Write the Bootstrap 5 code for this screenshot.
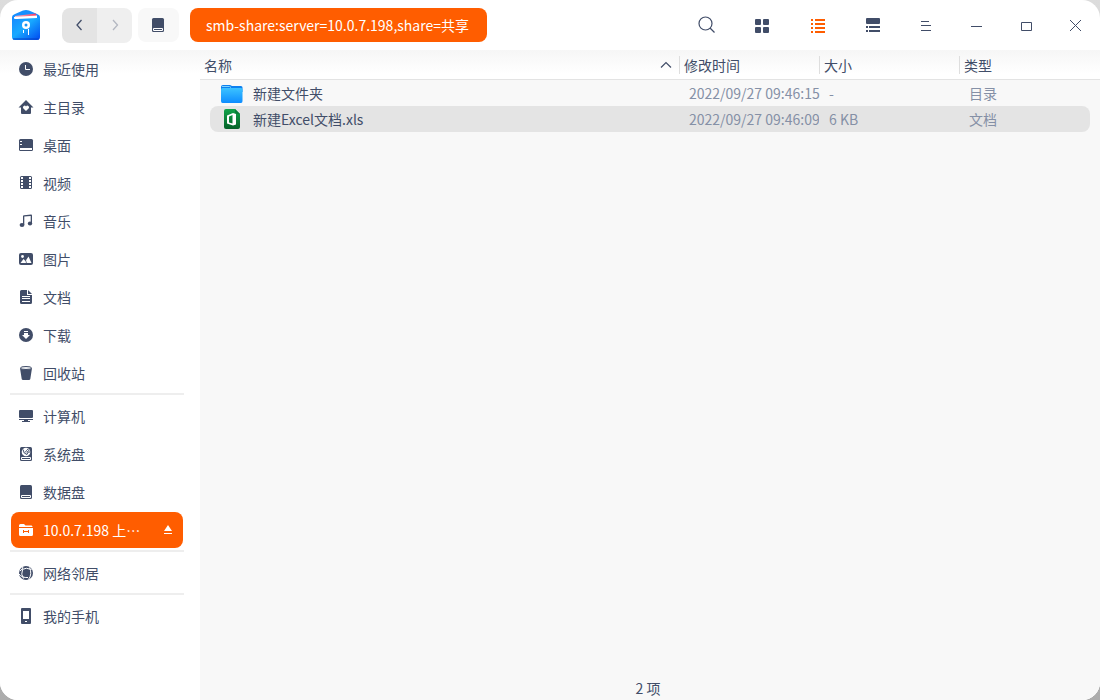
<!DOCTYPE html>
<html lang="zh-CN">
<head>
<meta charset="utf-8">
<meta name="viewport" content="width=device-width, initial-scale=1">
<title>文件管理器</title>
<link href="https://cdn.jsdelivr.net/npm/bootstrap@5.3.0/dist/css/bootstrap.min.css" rel="stylesheet">
<style>
:root { --ink: #414d68; --accent: #ff5d00; --muted-ink: #8590a6; }
body { font-family: "Noto Sans CJK SC", sans-serif; font-size: 14px; line-height: 20px; color: var(--ink);
  background: linear-gradient(#dcdcdc, #acacac); }
svg { display: block; flex: none; }
.app-window { border-radius: 18px; background: #fff; overflow: hidden; }
.titlebar { height: 50px; padding-left: 10px; }
.titlebar .btn { --bs-btn-padding-x: 0; --bs-btn-padding-y: 0; --bs-btn-font-size: 14px; --bs-btn-border-width: 0;
  --bs-btn-color: var(--ink); display: flex; align-items: center; justify-content: center; height: 34px; line-height: 20px; }
.history-nav { border-radius: 8px; overflow: hidden; margin-left: 20px; }
.history-nav .btn { width: 35px; height: 35px; border-radius: 0; background: #efefef; }
.history-nav .btn:first-child { background: #e4e4e4; }
.titlebar .disk-btn { width: 41px; background: #f8f8f8; border-radius: 8px; margin-left: 6px; }
.titlebar .path-btn { background: var(--accent); color: #fff; padding: 0 18px 0 16px; border-radius: 8px; margin-left: 11px; }
.view-btns { gap: 20px; margin-right: 8px; }
.view-btns .btn { width: 36px; }
.window-btns .btn { width: 50px; height: 50px; border-radius: 0; }
.work-area { background: linear-gradient(#f6f6f6, #fff 24px); }
.sidebar { width: 200px; padding: 0 16px 0 10px; }
.place { display: flex; align-items: center; gap: 9px; height: 36px; margin: 1px; padding: 0 11px 0 7px;
  border-radius: 8px; color: var(--ink); text-decoration: none; }
.place.active { background: var(--accent); color: #fff; }
.place-break { height: 2px; margin: 1px 0 2px; border: 0; background: #eee; opacity: 1; }
.file-pane { background: #f8f8f8; }
.file-table { --bs-table-bg: transparent; --bs-table-color: var(--ink); table-layout: fixed; width: 100%; margin: 0; color: var(--ink); }
.file-table > thead { background: linear-gradient(#f6f6f6, #fff 24px); }
.file-table > thead > tr > th { height: 30px; padding: 0 4px; font-weight: 400; vertical-align: middle; border: 0; box-shadow: inset 0 -1px #e3e3e3; }
.file-table > thead > tr > th + th { background: linear-gradient(#dedede, #dedede) 0 6px / 1px 18px no-repeat; padding-left: 5px; }
.file-table > tbody > tr > td { position: relative; z-index: 1; height: 26px; padding: 0 0 0 10px; vertical-align: middle; border: 0;
  color: var(--muted-ink); white-space: nowrap; }
.file-table > tbody > tr > td:first-child { padding-left: 21px; color: var(--ink); }
.selected > td::before { content: ""; position: absolute; z-index: -1; inset: 0; background: #e4e4e4; }
.selected > td:first-child::before { left: 10px; border-radius: 8px 0 0 8px; }
.selected > td:last-child::before { right: 10px; border-radius: 0 8px 8px 0; }
.col-date, .col-size { width: 140px; }
.col-kind { width: 141px; }
.status { height: 22px; padding-right: 4px; }
</style>
</head>
<body>
<div class="app-window d-flex flex-column vh-100">
  <header class="titlebar d-flex align-items-center">
    <svg width="32" height="32" viewBox="0 0 32 32" aria-hidden="true">
      <defs>
        <linearGradient id="logoBody" x1="0" y1="0" x2="1" y2="1"><stop offset="0" stop-color="#1686ff"/><stop offset=".45" stop-color="#18a9ff"/><stop offset="1" stop-color="#0048f0"/></linearGradient>
        <linearGradient id="logoRed"><stop offset="0" stop-color="#ffb9c2"/><stop offset="1" stop-color="#f23864"/></linearGradient>
      </defs>
      <path d="M2 8Q2 6 5 5L13 1.500Q16 .500 19 1.500L27 5Q30 6 30 8V20H2Z" fill="#168fff"/>
      <path d="M5 7L26 4.500L27 10H5Z" fill="url(#logoRed)"/>
      <path d="M4 8L27 6.500V12H4Z" fill="#fff"/>
      <path d="M2 8Q3 10 7 10L27 9Q30 9 30 7V28Q30 31 27 31H5Q2 31 2 28Z" fill="url(#logoBody)"/>
      <path d="M3 30H29" stroke="#0540c7"/>
      <circle cx="16" cy="16" r="4" fill="#fff"/><circle cx="16" cy="16" r="1.500" fill="#1695f5"/>
      <path d="M13.500 21V24M18.500 20V26" stroke="#fff"/>
    </svg>
    <div class="history-nav d-flex">
      <button type="button" class="btn" aria-label="后退"><svg width="16" height="16" fill="none" stroke="#414d68" stroke-width="1.300"><path d="M9.500 3L5 8L9.500 13"/></svg></button>
      <button type="button" class="btn" aria-label="前进"><svg width="16" height="16" fill="none" stroke="#b3b7c1" stroke-width="1.300"><path d="M6 3L10.500 8L6 13"/></svg></button>
    </div>
    <button type="button" class="btn disk-btn" aria-label="数据盘"><svg width="16" height="16"><path d="M1 2.500Q1 1 2.500 1H11.500Q13 1 13 2.500V13.500Q13 15 11.500 15H2.500Q1 15 1 13.500Z" fill="#414d68"/><path d="M2.500 11.500H11.500V13.500H2.500Z" fill="none" stroke="#fff"/></svg></button>
    <button type="button" class="btn path-btn">smb-share:server=10.0.7.198,share=共享</button>
    <div class="view-btns d-flex ms-auto">
      <button type="button" class="btn" aria-label="搜索"><svg width="18" height="18" fill="none" stroke="#414d68" stroke-width="1.200"><circle cx="8.500" cy="7.500" r="6.500"/><path d="M13 12L17.500 16.500"/></svg></button>
      <button type="button" class="btn" aria-label="图标视图"><svg width="16" height="16" fill="#414d68"><rect x="1" y="2" width="6" height="6" rx="1"/><rect x="9" y="2" width="6" height="6" rx="1"/><rect x="1" y="10" width="6" height="6" rx="1"/><rect x="9" y="10" width="6" height="6" rx="1"/></svg></button>
      <button type="button" class="btn" aria-label="列表视图"><svg width="16" height="16" fill="#ff5d00"><path d="M1 2h2v2H1zM5 2h10v2H5zM1 6h2v2H1zM5 6h10v2H5zM1 10h2v2H1zM5 10h10v2H5zM1 14h2v2H1zM5 14h10v2H5z"/></svg></button>
      <button type="button" class="btn" aria-label="分栏视图"><svg width="16" height="16" fill="#414d68"><rect y="1" width="14" height="6" rx="1"/><path d="M0 9h2v2H0zM3 9h11v2H3zM0 13h2v2H0zM3 13h11v2H3z"/></svg></button>
    </div>
    <div class="window-btns d-flex">
      <button type="button" class="btn" aria-label="菜单"><svg width="16" height="16" fill="#414d68"><path d="M4 4h8v1H4zM4 8h10v1H4zM4 13h10v1H4z"/></svg></button>
      <button type="button" class="btn" aria-label="最小化"><svg width="16" height="16" fill="#414d68"><path d="M4 9h11v1H4z"/></svg></button>
      <button type="button" class="btn" aria-label="最大化"><svg width="16" height="16" fill="none" stroke="#414d68"><path d="M4.500 5.500h10v8h-10z"/></svg></button>
      <button type="button" class="btn" aria-label="关闭"><svg width="16" height="16" fill="none" stroke="#414d68"><path d="M3 3L14 14M14 3L3 14"/></svg></button>
    </div>
  </header>

  <div class="work-area d-flex flex-grow-1">
    <nav class="sidebar d-flex flex-column flex-shrink-0" aria-label="位置">
      <a class="place" href="#"><svg width="16" height="16"><circle cx="8" cy="8" r="7" fill="#414d68"/><path d="M7.500 4V8.500H12" fill="none" stroke="#fff"/></svg>最近使用</a>
      <a class="place" href="#"><svg width="16" height="16"><path d="M8 1L15.500 8.500H13V14Q13 15 12 15H4Q3 15 3 14V8.500H.5Z" fill="#414d68"/><path d="M8 12L5.200 9.200A1.600 1.600 0 0 1 8 7.400A1.600 1.600 0 0 1 10.800 9.200Z" fill="#fff"/></svg>主目录</a>
      <a class="place" href="#"><svg width="16" height="16"><rect x="1" y="2" width="14" height="12" rx="1.500" fill="#414d68"/><path d="M2 4h2v1H2zM2 7h2v1H2zM2 11h12v2H2z" fill="#fff"/></svg>桌面</a>
      <a class="place" href="#"><svg width="16" height="16"><rect x="2" y="1" width="12" height="13" rx="1.500" fill="#414d68"/><path d="M3 2h2v2H3zM3 5h2v2H3zM3 8h2v2H3zM3 11h2v2H3zM11 2h2v2h-2zM11 5h2v2h-2zM11 8h2v2h-2zM11 11h2v2h-2z" fill="#fff"/></svg>视频</a>
      <a class="place" href="#"><svg width="16" height="16" fill="#414d68"><path d="M5 12V3.200Q5 2.300 6 2.200L13 1.500Q14 1.400 14 2.400V10.500H12.700V3L6.300 3.600V12Z"/><ellipse cx="4" cy="12" rx="2.400" ry="1.900"/><ellipse cx="12" cy="10.500" rx="2.200" ry="1.900"/></svg>音乐</a>
      <a class="place" href="#"><svg width="16" height="16"><rect x="1" y="2" width="14" height="12" rx="2" fill="#414d68"/><circle cx="4.500" cy="5.500" r="1.400" fill="#fff"/><path d="M2.500 12L5.500 8L7.500 10L10.500 5.500L13.500 12Z" fill="#fff"/><path d="M7.500 9L8.500 12" stroke="#414d68" stroke-width=".7"/></svg>图片</a>
      <a class="place" href="#"><svg width="16" height="16"><path d="M3.500 1H9V6H14V13.500Q14 15 12.500 15H3.500Q2 15 2 13.500V2.500Q2 1 3.500 1ZM10 1L14 5H10Z" fill="#414d68"/><path d="M4 7.500h8M4 9.500h8M4 12.500h8" stroke="#fff"/></svg>文档</a>
      <a class="place" href="#"><svg width="16" height="16"><circle cx="8" cy="8" r="7" fill="#414d68"/><path d="M6 4h4v1H6zM6 6h4v2h2L8 12L4 8h2z" fill="#fff"/></svg>下载</a>
      <a class="place" href="#"><svg width="16" height="16"><path d="M2 3L3.700 14Q4 15 5 15H11Q12 15 12.300 14L14 3Z" fill="#414d68"/><ellipse cx="8" cy="3" rx="5.500" ry="1.500" fill="#eef0f3" stroke="#414d68"/></svg>回收站</a>
      <hr class="place-break">
      <a class="place" href="#"><svg width="16" height="16" fill="#414d68"><rect x="1" y="2" width="14" height="8" rx="1"/><path d="M1 11h14v1H1zM6 12h4v1H6zM4 13h8v1H4z"/></svg>计算机</a>
      <a class="place" href="#"><svg width="16" height="16"><rect x="2" y="1" width="12" height="14" rx="1.500" fill="#414d68"/><circle cx="8" cy="6" r="4.300" fill="#fff"/><path d="M5 3.500Q5.500 8 9 8.500Q11 6 8.500 4.500Q7 5.500 8 6.500M9 3Q12 4 11 7" fill="none" stroke="#414d68"/><path d="M3.500 11.500h9v2h-9z" fill="none" stroke="#fff"/></svg>系统盘</a>
      <a class="place" href="#"><svg width="16" height="16"><rect x="2" y="1" width="12" height="14" rx="1.500" fill="#414d68"/><path d="M3.500 11.500h9v2h-9z" fill="none" stroke="#fff"/></svg>数据盘</a>
      <a class="place active" href="#" aria-current="page"><svg width="16" height="16"><path d="M1 4V3.500Q1 2 2.500 2H6L7.500 3.500H13.500Q14.500 3.500 14.500 5H1ZM1 6H15V12.500Q15 14 13.500 14H2.500Q1 14 1 12.500Z" fill="#fff"/><path d="M5.500 8v3M10.500 8v3M5.500 9.500h5" stroke="#ff5d00"/></svg>10.0.7.198 上…<svg class="ms-auto" width="8" height="16" fill="#fff"><path d="M4 3L8 9H0ZM0 11h8v1H0Z"/></svg></a>
      <hr class="place-break">
      <a class="place" href="#"><svg width="16" height="16"><circle cx="8" cy="8" r="7" fill="#414d68"/><path d="M5 1.500Q5 4 2 6M4 4.500Q8 2 13.500 4.500M11.500 2.500Q14.500 9 10.500 14.500M1 9Q4 13 10 12.500M4.500 5Q2.500 9 5.500 13.500" fill="none" stroke="#fff"/></svg>网络邻居</a>
      <hr class="place-break">
      <a class="place" href="#"><svg width="16" height="16"><rect x="3" width="10" height="16" rx="1" fill="#414d68"/><path d="M5 3h6v8H5zM7 13h2v1H7z" fill="#fff"/></svg>我的手机</a>
    </nav>

    <main class="file-pane d-flex flex-column flex-grow-1">
      <table class="table file-table">
        <colgroup><col><col class="col-date"><col class="col-size"><col class="col-kind"></colgroup>
        <thead>
          <tr>
            <th scope="col" aria-sort="ascending"><div class="d-flex align-items-center justify-content-between">名称<svg width="18" height="16" fill="none" stroke="#414d68" stroke-width="1.200"><path d="M4 10.500L9 5.500L14 10.500"/></svg></div></th>
            <th scope="col">修改时间</th><th scope="col">大小</th><th scope="col">类型</th>
          </tr>
        </thead>
        <tbody>
          <tr>
            <td><div class="d-flex align-items-center"><svg class="me-2" width="24" height="24" viewBox="0 0 24 24"><defs><linearGradient id="folderFill" x1="0" y1="0" x2="0" y2="1"><stop offset="0" stop-color="#3cc3ff"/><stop offset="1" stop-color="#0d8cff"/></linearGradient></defs><path d="M0 6Q0 4 2 4H9L11 5H20Q21.500 5 21.500 6.500V11H0Z" fill="#0c80ef"/><path d="M1 5.500H8.500L10 6.500" stroke="#7ed3ff" fill="none"/><path d="M0 8.500Q0 7 1.500 7H20Q21.500 7 21.500 8.500V20Q21.500 22 20 22H1.500Q0 22 0 20Z" fill="url(#folderFill)"/></svg>新建文件夹</div></td>
            <td>2022/09/27 09:46:15</td><td>-</td><td>目录</td>
          </tr>
          <tr class="selected">
            <td><div class="d-flex align-items-center"><svg class="me-2" width="24" height="24" viewBox="0 0 24 24"><defs><linearGradient id="sheetFill" x1="0" y1="0" x2="0" y2="1"><stop offset="0" stop-color="#12a34a"/><stop offset="1" stop-color="#046228"/></linearGradient></defs><path d="M5 2H14L19 7V20Q19 22 17 22H5Q3 22 3 20V4Q3 2 5 2Z" fill="url(#sheetFill)"/><path d="M14 2L19 7H16Q14 7 14 5Z" fill="#087d38"/><path fill-rule="evenodd" d="M6 8.500L12 6L15 7V17.500L12 18.500L6 16.500ZM8 9.500V15.500L11.500 16.500V8Z" fill="#fff"/></svg>新建Excel文档.xls</div></td>
            <td>2022/09/27 09:46:09</td><td>6 KB</td><td>文档</td>
          </tr>
        </tbody>
      </table>
      <div class="status mt-auto text-center">2 项</div>
    </main>
  </div>
</div>
<script src="https://cdn.jsdelivr.net/npm/bootstrap@5.3.0/dist/js/bootstrap.bundle.min.js"></script>
</body>
</html>
